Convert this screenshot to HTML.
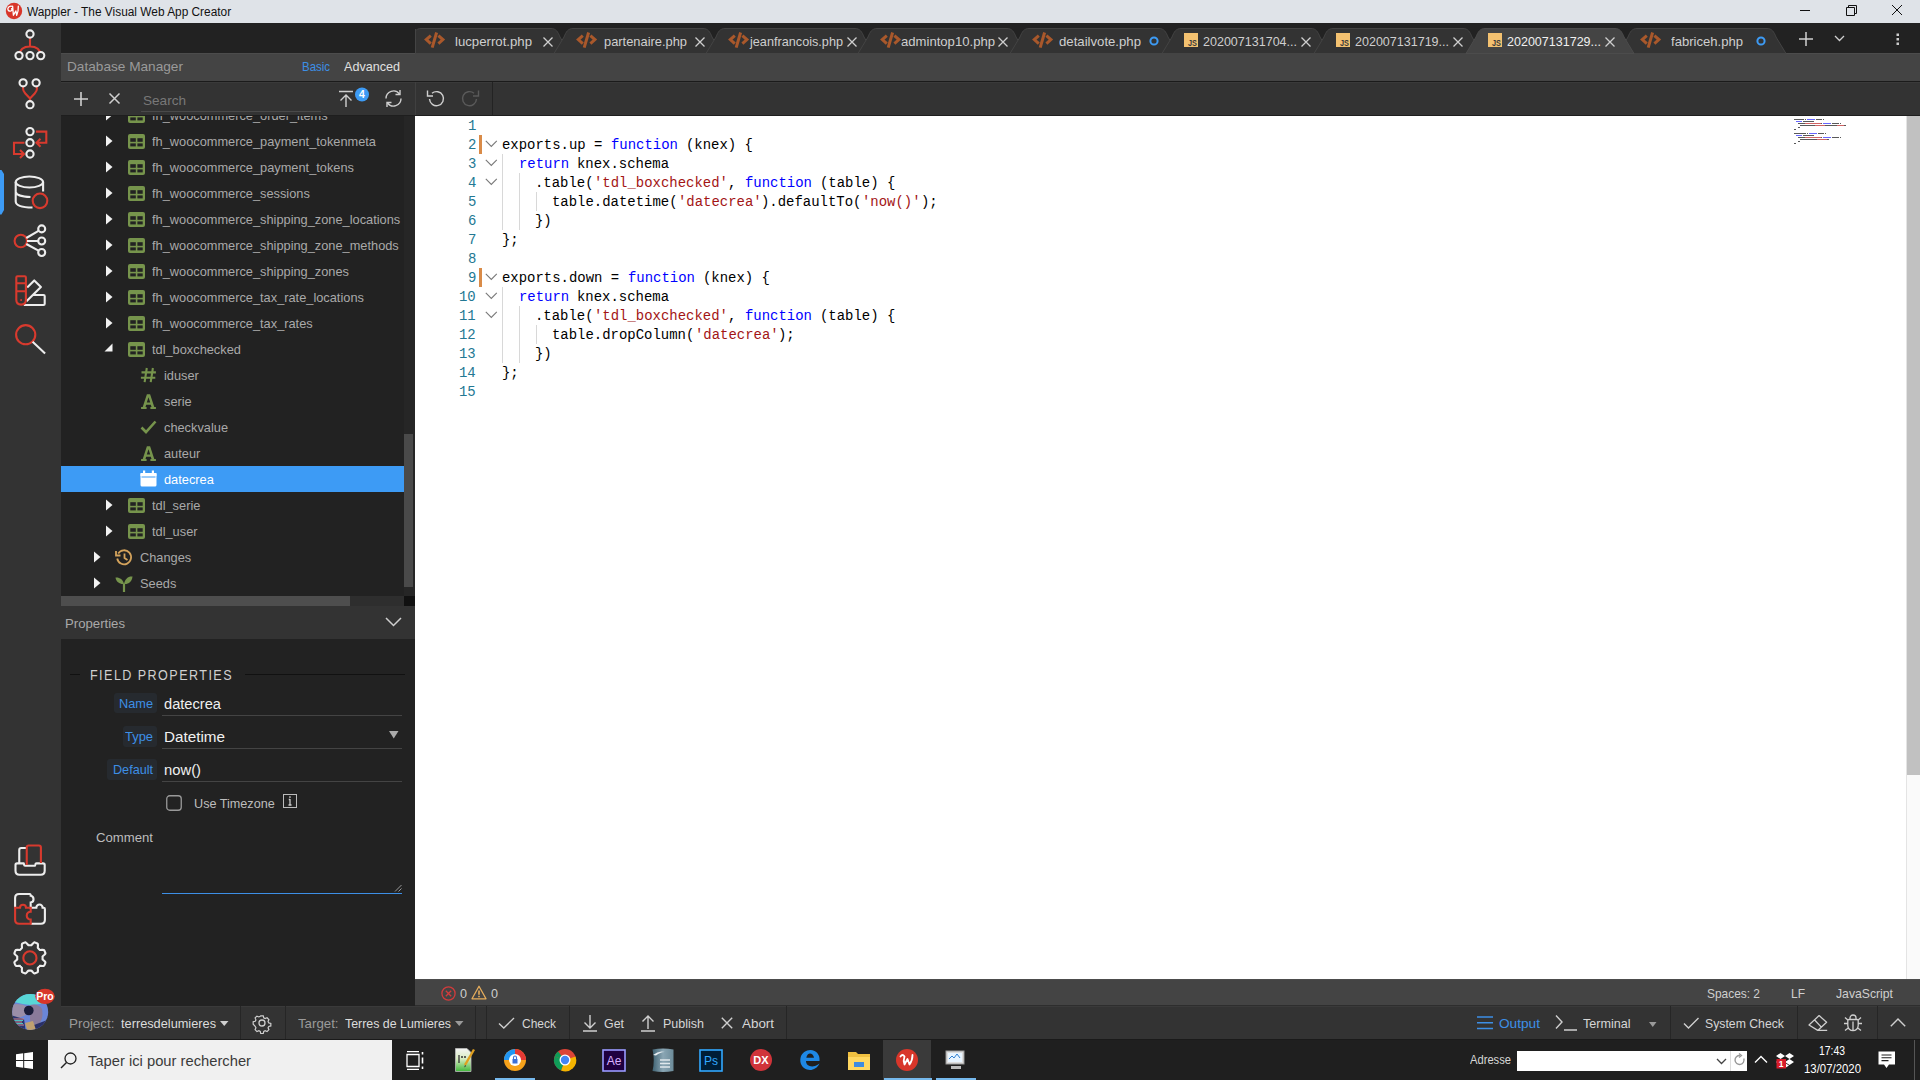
<!DOCTYPE html>
<html><head><meta charset="utf-8">
<style>
*{margin:0;padding:0;box-sizing:border-box}
html,body{width:1920px;height:1080px;overflow:hidden;background:#222;font-family:"Liberation Sans",sans-serif}
.a{position:absolute}
.t{position:absolute;white-space:pre;line-height:1}
svg{position:absolute;overflow:visible}
</style></head><body>
<div class="a" style="left:0px;top:0px;width:1920px;height:23px;background:#dfe3e8;"></div>
<div class="a" style="left:0px;top:23px;width:61px;height:1017px;background:#333;"></div>
<div class="a" style="left:61px;top:23px;width:1859px;height:30px;background:#222;"></div>
<div class="a" style="left:61px;top:53px;width:1859px;height:28px;background:#444;"></div>
<div class="a" style="left:61px;top:53px;width:1859px;height:1px;background:#4c4c4c;"></div>
<div class="a" style="left:61px;top:81px;width:1859px;height:1px;background:#1b1b1b;"></div>
<div class="a" style="left:61px;top:82px;width:1859px;height:34px;background:#333;"></div>
<div class="a" style="left:61px;top:82px;width:1859px;height:1px;background:#3a3a3a;"></div>
<div class="a" style="left:61px;top:115px;width:1859px;height:1px;background:#1e1e1e;"></div>
<div class="a" style="left:61px;top:116px;width:354px;height:490px;background:#222;"></div>
<div class="a" style="left:61px;top:606px;width:354px;height:33px;background:#333;"></div>
<div class="a" style="left:61px;top:639px;width:354px;height:367px;background:#222;"></div>
<div class="a" style="left:415px;top:116px;width:1505px;height:863px;background:#fff;"></div>
<div class="a" style="left:415px;top:979px;width:1505px;height:27px;background:#444;"></div>
<div class="a" style="left:415px;top:979px;width:1505px;height:1px;background:#4c4c4c;"></div>
<div class="a" style="left:415px;top:1005px;width:1505px;height:1px;background:#2e2e2e;"></div>
<div class="a" style="left:61px;top:1006px;width:1859px;height:34px;background:#333;"></div>
<div class="a" style="left:0px;top:1040px;width:1920px;height:40px;background:#1f1f1f;"></div>
<svg style="left:5px;top:2px;" width="18" height="18" viewBox="0 0 18 18"><circle cx="9" cy="9" r="8.2" fill="#d8362a"/><path d="M7.4 4.3Q4 3.3 2.9 6.2Q2.6 9.3 5.5 9.2Q7.6 8.8 6.6 6.6 M7.6 4.1L8.4 13.3L10.9 8.9L11.7 13.3Q13.6 9 13.3 4.1" fill="none" stroke="#fff" stroke-width="1.3" stroke-linecap="round" stroke-linejoin="round"/></svg>
<div class="t" style="left:27.00px;top:5.84px;font:normal 12px/12px 'Liberation Sans',sans-serif;color:#111;transform:scaleX(0.9894);transform-origin:0 0;">Wappler - The Visual Web App Creator</div>
<svg style="left:1795px;top:0px;" width="120" height="23" viewBox="0 0 120 23"><path d="M5 10.5h10" stroke="#111" stroke-width="1"/><path d="M51.5 7.5h8v8h-8z M53.5 7.5v-2h8v8h-2" fill="none" stroke="#111" stroke-width="1"/><path d="M97 5l10 10M107 5l-10 10" stroke="#111" stroke-width="1"/></svg>
<svg style="left:0px;top:0px;" width="1920" height="60" viewBox="0 0 1920 60"><defs><clipPath id="tc"><rect x="415" y="23" width="1400" height="31"/></clipPath></defs><g clip-path="url(#tc)"><path d="M402 53.5 L412 37 C414 32 416 28.5 421 28.5 L551 28.5 C556 28.5 558 32 560 37 L570 53.5 Z" fill="#333" stroke="#444" stroke-width="1"/><path d="M554 53.5 L564 37 C566 32 568 28.5 573 28.5 L703 28.5 C708 28.5 710 32 712 37 L722 53.5 Z" fill="#333" stroke="#444" stroke-width="1"/><path d="M706 53.5 L716 37 C718 32 720 28.5 725 28.5 L855 28.5 C860 28.5 862 32 864 37 L874 53.5 Z" fill="#333" stroke="#444" stroke-width="1"/><path d="M858 53.5 L868 37 C870 32 872 28.5 877 28.5 L1007 28.5 C1012 28.5 1014 32 1016 37 L1026 53.5 Z" fill="#333" stroke="#444" stroke-width="1"/><path d="M1010 53.5 L1020 37 C1022 32 1024 28.5 1029 28.5 L1159 28.5 C1164 28.5 1166 32 1168 37 L1178 53.5 Z" fill="#333" stroke="#444" stroke-width="1"/><path d="M1162 53.5 L1172 37 C1174 32 1176 28.5 1181 28.5 L1311 28.5 C1316 28.5 1318 32 1320 37 L1330 53.5 Z" fill="#333" stroke="#444" stroke-width="1"/><path d="M1314 53.5 L1324 37 C1326 32 1328 28.5 1333 28.5 L1463 28.5 C1468 28.5 1470 32 1472 37 L1482 53.5 Z" fill="#333" stroke="#444" stroke-width="1"/><path d="M1618 53.5 L1628 37 C1630 32 1632 28.5 1637 28.5 L1767 28.5 C1772 28.5 1774 32 1776 37 L1786 53.5 Z" fill="#333" stroke="#444" stroke-width="1"/><path d="M1466 53.5 L1476 37 C1478 32 1480 28.5 1485 28.5 L1615 28.5 C1620 28.5 1622 32 1624 37 L1634 53.5 Z" fill="#444" stroke="#4c4c4c" stroke-width="1"/></g></svg>
<div class="a" style="left:415px;top:29px;width:1px;height:24px;background:#444;"></div>
<svg style="left:412px;top:25px;" width="30" height="26" viewBox="0 0 30 26"><path d="M18.8 10.6 L14.3 14.6 L18.8 18.6 M26.4 10.6 L30.9 14.6 L26.4 18.6 M24.6 7.5 L20.2 22.7" fill="none" stroke="#a9582b" stroke-width="3" stroke-linecap="butt"/></svg>
<div class="t" style="left:455.00px;top:35.00px;font:normal 13px/13px 'Liberation Sans',sans-serif;color:#cfcfcf;transform:scaleX(1.0148);transform-origin:0 0;">lucperrot.php</div>
<svg style="left:543px;top:37px;" width="10" height="10" viewBox="0 0 10 10"><path d="M0.5 0.5l9 9M9.5 0.5l-9 9" stroke="#cfcfcf" stroke-width="1.3"/></svg>
<svg style="left:564px;top:25px;" width="30" height="26" viewBox="0 0 30 26"><path d="M18.8 10.6 L14.3 14.6 L18.8 18.6 M26.4 10.6 L30.9 14.6 L26.4 18.6 M24.6 7.5 L20.2 22.7" fill="none" stroke="#a9582b" stroke-width="3" stroke-linecap="butt"/></svg>
<div class="t" style="left:604.00px;top:35.00px;font:normal 13px/13px 'Liberation Sans',sans-serif;color:#cfcfcf;transform:scaleX(0.9900);transform-origin:0 0;">partenaire.php</div>
<svg style="left:695px;top:37px;" width="10" height="10" viewBox="0 0 10 10"><path d="M0.5 0.5l9 9M9.5 0.5l-9 9" stroke="#cfcfcf" stroke-width="1.3"/></svg>
<svg style="left:716px;top:25px;" width="30" height="26" viewBox="0 0 30 26"><path d="M18.8 10.6 L14.3 14.6 L18.8 18.6 M26.4 10.6 L30.9 14.6 L26.4 18.6 M24.6 7.5 L20.2 22.7" fill="none" stroke="#a9582b" stroke-width="3" stroke-linecap="butt"/></svg>
<div class="t" style="left:750.00px;top:35.00px;font:normal 13px/13px 'Liberation Sans',sans-serif;color:#cfcfcf;transform:scaleX(0.9749);transform-origin:0 0;">jeanfrancois.php</div>
<svg style="left:847px;top:37px;" width="10" height="10" viewBox="0 0 10 10"><path d="M0.5 0.5l9 9M9.5 0.5l-9 9" stroke="#cfcfcf" stroke-width="1.3"/></svg>
<svg style="left:868px;top:25px;" width="30" height="26" viewBox="0 0 30 26"><path d="M18.8 10.6 L14.3 14.6 L18.8 18.6 M26.4 10.6 L30.9 14.6 L26.4 18.6 M24.6 7.5 L20.2 22.7" fill="none" stroke="#a9582b" stroke-width="3" stroke-linecap="butt"/></svg>
<div class="t" style="left:901.00px;top:35.00px;font:normal 13px/13px 'Liberation Sans',sans-serif;color:#cfcfcf;transform:scaleX(1.0081);transform-origin:0 0;">admintop10.php</div>
<svg style="left:998px;top:37px;" width="10" height="10" viewBox="0 0 10 10"><path d="M0.5 0.5l9 9M9.5 0.5l-9 9" stroke="#cfcfcf" stroke-width="1.3"/></svg>
<svg style="left:1020px;top:25px;" width="30" height="26" viewBox="0 0 30 26"><path d="M18.8 10.6 L14.3 14.6 L18.8 18.6 M26.4 10.6 L30.9 14.6 L26.4 18.6 M24.6 7.5 L20.2 22.7" fill="none" stroke="#a9582b" stroke-width="3" stroke-linecap="butt"/></svg>
<div class="t" style="left:1059.00px;top:35.00px;font:normal 13px/13px 'Liberation Sans',sans-serif;color:#cfcfcf;transform:scaleX(1.0130);transform-origin:0 0;">detailvote.php</div>
<svg style="left:1148px;top:35px;" width="12" height="12" viewBox="0 0 12 12"><circle cx="6" cy="6" r="3.6" fill="none" stroke="#3d9bf5" stroke-width="2"/></svg>
<svg style="left:1184px;top:33px;" width="14" height="14" viewBox="0 0 14 14"><rect x="0" y="0" width="14" height="14" fill="#f3c170"/><text x="4" y="12.7" textLength="9" lengthAdjust="spacingAndGlyphs" font-family="Liberation Sans" font-weight="bold" font-size="9.5" fill="#3a3a3a">JS</text></svg>
<div class="t" style="left:1203.00px;top:35.00px;font:normal 13px/13px 'Liberation Sans',sans-serif;color:#cfcfcf;transform:scaleX(0.9632);transform-origin:0 0;">202007131704...</div>
<svg style="left:1301px;top:37px;" width="10" height="10" viewBox="0 0 10 10"><path d="M0.5 0.5l9 9M9.5 0.5l-9 9" stroke="#cfcfcf" stroke-width="1.3"/></svg>
<svg style="left:1336px;top:33px;" width="14" height="14" viewBox="0 0 14 14"><rect x="0" y="0" width="14" height="14" fill="#f3c170"/><text x="4" y="12.7" textLength="9" lengthAdjust="spacingAndGlyphs" font-family="Liberation Sans" font-weight="bold" font-size="9.5" fill="#3a3a3a">JS</text></svg>
<div class="t" style="left:1355.00px;top:35.00px;font:normal 13px/13px 'Liberation Sans',sans-serif;color:#cfcfcf;transform:scaleX(0.9632);transform-origin:0 0;">202007131719...</div>
<svg style="left:1453px;top:37px;" width="10" height="10" viewBox="0 0 10 10"><path d="M0.5 0.5l9 9M9.5 0.5l-9 9" stroke="#cfcfcf" stroke-width="1.3"/></svg>
<svg style="left:1488px;top:33px;" width="14" height="14" viewBox="0 0 14 14"><rect x="0" y="0" width="14" height="14" fill="#f3c170"/><text x="4" y="12.7" textLength="9" lengthAdjust="spacingAndGlyphs" font-family="Liberation Sans" font-weight="bold" font-size="9.5" fill="#3a3a3a">JS</text></svg>
<div class="t" style="left:1507.00px;top:35.00px;font:normal 13px/13px 'Liberation Sans',sans-serif;color:#f0f0f0;transform:scaleX(0.9632);transform-origin:0 0;">202007131729...</div>
<svg style="left:1605px;top:37px;" width="10" height="10" viewBox="0 0 10 10"><path d="M0.5 0.5l9 9M9.5 0.5l-9 9" stroke="#cfcfcf" stroke-width="1.3"/></svg>
<svg style="left:1628px;top:25px;" width="30" height="26" viewBox="0 0 30 26"><path d="M18.8 10.6 L14.3 14.6 L18.8 18.6 M26.4 10.6 L30.9 14.6 L26.4 18.6 M24.6 7.5 L20.2 22.7" fill="none" stroke="#a9582b" stroke-width="3" stroke-linecap="butt"/></svg>
<div class="t" style="left:1671.00px;top:35.00px;font:normal 13px/13px 'Liberation Sans',sans-serif;color:#cfcfcf;transform:scaleX(1.0063);transform-origin:0 0;">fabriceh.php</div>
<svg style="left:1755px;top:35px;" width="12" height="12" viewBox="0 0 12 12"><circle cx="6" cy="6" r="3.6" fill="none" stroke="#3d9bf5" stroke-width="2"/></svg>
<svg style="left:1799px;top:32px;" width="14" height="14" viewBox="0 0 14 14"><path d="M7 0v14M0 7h14" stroke="#d0d0d0" stroke-width="1.5"/></svg>
<svg style="left:1834px;top:35px;" width="11" height="7" viewBox="0 0 11 7"><path d="M1 1l4.5 4.5L10 1" fill="none" stroke="#d0d0d0" stroke-width="1.3"/></svg>
<svg style="left:1896px;top:33px;" width="4" height="13" viewBox="0 0 4 13"><rect x="0.5" y="0.5" width="2.5" height="2.5" fill="#ccc"/><rect x="0.5" y="5" width="2.5" height="2.5" fill="#ccc"/><rect x="0.5" y="9.5" width="2.5" height="2.5" fill="#ccc"/></svg>
<div class="t" style="left:67.00px;top:60.00px;font:normal 13px/13px 'Liberation Sans',sans-serif;color:#9a9a9a;transform:scaleX(1.0491);transform-origin:0 0;">Database Manager</div>
<div class="t" style="left:302.00px;top:60.00px;font:normal 13px/13px 'Liberation Sans',sans-serif;color:#3d8fe6;transform:scaleX(0.8808);transform-origin:0 0;">Basic</div>
<div class="t" style="left:344.00px;top:60.00px;font:normal 13px/13px 'Liberation Sans',sans-serif;color:#e0e0e0;transform:scaleX(0.9685);transform-origin:0 0;">Advanced</div>
<svg style="left:74px;top:92px;" width="14" height="14" viewBox="0 0 14 14"><path d="M7 0v14M0 7h14" stroke="#cfcfcf" stroke-width="1.6"/></svg>
<svg style="left:109px;top:93px;" width="11" height="11" viewBox="0 0 11 11"><path d="M0.5 0.5l10 10M10.5 0.5l-10 10" stroke="#cfcfcf" stroke-width="1.5"/></svg>
<div class="t" style="left:143.00px;top:94.00px;font:normal 13px/13px 'Liberation Sans',sans-serif;color:#787878;transform:scaleX(1.0439);transform-origin:0 0;">Search</div>
<div class="a" style="left:141px;top:111px;width:180px;height:1px;background:#4a4a4a;"></div>
<svg style="left:338px;top:90px;" width="16" height="18" viewBox="0 0 16 18"><path d="M1 1.5h14M8 17V5M2.5 10.5L8 5l5.5 5.5" fill="none" stroke="#cfcfcf" stroke-width="1.4"/></svg>
<svg style="left:354px;top:87px;" width="16" height="16" viewBox="0 0 16 16"><circle cx="8" cy="7.5" r="7" fill="#3d9bf5"/><text x="8" y="11.3" text-anchor="middle" font-family="Liberation Sans" font-weight="bold" font-size="10.5" fill="#fff">4</text></svg>
<svg style="left:384px;top:89px;" width="19" height="19" viewBox="0 0 19 19"><path d="M2 9.5A7.5 7.5 0 0 1 15.5 5M17 9.5A7.5 7.5 0 0 1 3.5 14" fill="none" stroke="#cfcfcf" stroke-width="1.4"/><path d="M16 1v4.5h-4.5M3 18v-4.5h4.5" fill="none" stroke="#cfcfcf" stroke-width="1.4"/></svg>
<div class="a" style="left:415px;top:82px;width:1px;height:33px;background:#404040;"></div>
<div class="a" style="left:404px;top:116px;width:11px;height:490px;background:#262626;"></div>
<div class="a" style="left:404px;top:434px;width:9px;height:153px;background:#4a4a4a;"></div>
<div class="a" style="left:61px;top:596px;width:343px;height:10px;background:#2e2e2e;"></div>
<div class="a" style="left:61px;top:596px;width:289px;height:10px;background:#4e4e4e;"></div>
<div class="a" style="left:404px;top:596px;width:11px;height:10px;background:#111;"></div>
<div class="a" style="left:61px;top:466px;width:343px;height:26px;background:#3d9bf5;"></div>
<div class="a" style="left:61px;top:116px;width:343px;height:481px;overflow:hidden">
<svg style="left:45px;top:-7px;" width="8" height="12" viewBox="0 0 8 12"><path d="M0 0.5L6.5 6L0 11.5Z" fill="#f2f2f2"/></svg>
<svg style="left:67px;top:-8px;" width="17" height="15" viewBox="0 0 17 15"><rect x="0" y="0" width="17" height="15" rx="2" fill="#76944c"/><rect x="2.3" y="4.2" width="5.5" height="3.6" fill="#222"/><rect x="9.4" y="4.2" width="5.3" height="3.6" fill="#222"/><rect x="2.3" y="9.4" width="5.5" height="3" fill="#222"/><rect x="9.4" y="9.4" width="5.3" height="3" fill="#222"/></svg>
<div class="t" style="left:91.00px;top:-7.00px;font:normal 13px/13px 'Liberation Sans',sans-serif;color:#a9a9a9;transform:scaleX(0.9840);transform-origin:0 0;">fh_woocommerce_order_items</div>
<svg style="left:45px;top:19px;" width="8" height="12" viewBox="0 0 8 12"><path d="M0 0.5L6.5 6L0 11.5Z" fill="#f2f2f2"/></svg>
<svg style="left:67px;top:18px;" width="17" height="15" viewBox="0 0 17 15"><rect x="0" y="0" width="17" height="15" rx="2" fill="#76944c"/><rect x="2.3" y="4.2" width="5.5" height="3.6" fill="#222"/><rect x="9.4" y="4.2" width="5.3" height="3.6" fill="#222"/><rect x="2.3" y="9.4" width="5.5" height="3" fill="#222"/><rect x="9.4" y="9.4" width="5.3" height="3" fill="#222"/></svg>
<div class="t" style="left:91.00px;top:19.00px;font:normal 13px/13px 'Liberation Sans',sans-serif;color:#a9a9a9;transform:scaleX(0.9840);transform-origin:0 0;">fh_woocommerce_payment_tokenmeta</div>
<svg style="left:45px;top:45px;" width="8" height="12" viewBox="0 0 8 12"><path d="M0 0.5L6.5 6L0 11.5Z" fill="#f2f2f2"/></svg>
<svg style="left:67px;top:44px;" width="17" height="15" viewBox="0 0 17 15"><rect x="0" y="0" width="17" height="15" rx="2" fill="#76944c"/><rect x="2.3" y="4.2" width="5.5" height="3.6" fill="#222"/><rect x="9.4" y="4.2" width="5.3" height="3.6" fill="#222"/><rect x="2.3" y="9.4" width="5.5" height="3" fill="#222"/><rect x="9.4" y="9.4" width="5.3" height="3" fill="#222"/></svg>
<div class="t" style="left:91.00px;top:45.00px;font:normal 13px/13px 'Liberation Sans',sans-serif;color:#a9a9a9;transform:scaleX(0.9840);transform-origin:0 0;">fh_woocommerce_payment_tokens</div>
<svg style="left:45px;top:71px;" width="8" height="12" viewBox="0 0 8 12"><path d="M0 0.5L6.5 6L0 11.5Z" fill="#f2f2f2"/></svg>
<svg style="left:67px;top:70px;" width="17" height="15" viewBox="0 0 17 15"><rect x="0" y="0" width="17" height="15" rx="2" fill="#76944c"/><rect x="2.3" y="4.2" width="5.5" height="3.6" fill="#222"/><rect x="9.4" y="4.2" width="5.3" height="3.6" fill="#222"/><rect x="2.3" y="9.4" width="5.5" height="3" fill="#222"/><rect x="9.4" y="9.4" width="5.3" height="3" fill="#222"/></svg>
<div class="t" style="left:91.00px;top:71.00px;font:normal 13px/13px 'Liberation Sans',sans-serif;color:#a9a9a9;transform:scaleX(0.9840);transform-origin:0 0;">fh_woocommerce_sessions</div>
<svg style="left:45px;top:97px;" width="8" height="12" viewBox="0 0 8 12"><path d="M0 0.5L6.5 6L0 11.5Z" fill="#f2f2f2"/></svg>
<svg style="left:67px;top:96px;" width="17" height="15" viewBox="0 0 17 15"><rect x="0" y="0" width="17" height="15" rx="2" fill="#76944c"/><rect x="2.3" y="4.2" width="5.5" height="3.6" fill="#222"/><rect x="9.4" y="4.2" width="5.3" height="3.6" fill="#222"/><rect x="2.3" y="9.4" width="5.5" height="3" fill="#222"/><rect x="9.4" y="9.4" width="5.3" height="3" fill="#222"/></svg>
<div class="t" style="left:91.00px;top:97.00px;font:normal 13px/13px 'Liberation Sans',sans-serif;color:#a9a9a9;transform:scaleX(0.9840);transform-origin:0 0;">fh_woocommerce_shipping_zone_locations</div>
<svg style="left:45px;top:123px;" width="8" height="12" viewBox="0 0 8 12"><path d="M0 0.5L6.5 6L0 11.5Z" fill="#f2f2f2"/></svg>
<svg style="left:67px;top:122px;" width="17" height="15" viewBox="0 0 17 15"><rect x="0" y="0" width="17" height="15" rx="2" fill="#76944c"/><rect x="2.3" y="4.2" width="5.5" height="3.6" fill="#222"/><rect x="9.4" y="4.2" width="5.3" height="3.6" fill="#222"/><rect x="2.3" y="9.4" width="5.5" height="3" fill="#222"/><rect x="9.4" y="9.4" width="5.3" height="3" fill="#222"/></svg>
<div class="t" style="left:91.00px;top:123.00px;font:normal 13px/13px 'Liberation Sans',sans-serif;color:#a9a9a9;transform:scaleX(0.9840);transform-origin:0 0;">fh_woocommerce_shipping_zone_methods</div>
<svg style="left:45px;top:149px;" width="8" height="12" viewBox="0 0 8 12"><path d="M0 0.5L6.5 6L0 11.5Z" fill="#f2f2f2"/></svg>
<svg style="left:67px;top:148px;" width="17" height="15" viewBox="0 0 17 15"><rect x="0" y="0" width="17" height="15" rx="2" fill="#76944c"/><rect x="2.3" y="4.2" width="5.5" height="3.6" fill="#222"/><rect x="9.4" y="4.2" width="5.3" height="3.6" fill="#222"/><rect x="2.3" y="9.4" width="5.5" height="3" fill="#222"/><rect x="9.4" y="9.4" width="5.3" height="3" fill="#222"/></svg>
<div class="t" style="left:91.00px;top:149.00px;font:normal 13px/13px 'Liberation Sans',sans-serif;color:#a9a9a9;transform:scaleX(0.9840);transform-origin:0 0;">fh_woocommerce_shipping_zones</div>
<svg style="left:45px;top:175px;" width="8" height="12" viewBox="0 0 8 12"><path d="M0 0.5L6.5 6L0 11.5Z" fill="#f2f2f2"/></svg>
<svg style="left:67px;top:174px;" width="17" height="15" viewBox="0 0 17 15"><rect x="0" y="0" width="17" height="15" rx="2" fill="#76944c"/><rect x="2.3" y="4.2" width="5.5" height="3.6" fill="#222"/><rect x="9.4" y="4.2" width="5.3" height="3.6" fill="#222"/><rect x="2.3" y="9.4" width="5.5" height="3" fill="#222"/><rect x="9.4" y="9.4" width="5.3" height="3" fill="#222"/></svg>
<div class="t" style="left:91.00px;top:175.00px;font:normal 13px/13px 'Liberation Sans',sans-serif;color:#a9a9a9;transform:scaleX(0.9840);transform-origin:0 0;">fh_woocommerce_tax_rate_locations</div>
<svg style="left:45px;top:201px;" width="8" height="12" viewBox="0 0 8 12"><path d="M0 0.5L6.5 6L0 11.5Z" fill="#f2f2f2"/></svg>
<svg style="left:67px;top:200px;" width="17" height="15" viewBox="0 0 17 15"><rect x="0" y="0" width="17" height="15" rx="2" fill="#76944c"/><rect x="2.3" y="4.2" width="5.5" height="3.6" fill="#222"/><rect x="9.4" y="4.2" width="5.3" height="3.6" fill="#222"/><rect x="2.3" y="9.4" width="5.5" height="3" fill="#222"/><rect x="9.4" y="9.4" width="5.3" height="3" fill="#222"/></svg>
<div class="t" style="left:91.00px;top:201.00px;font:normal 13px/13px 'Liberation Sans',sans-serif;color:#a9a9a9;transform:scaleX(0.9840);transform-origin:0 0;">fh_woocommerce_tax_rates</div>
<svg style="left:43px;top:226.5px;" width="10" height="10" viewBox="0 0 10 10"><path d="M8.5 0.5V8.5H0.5Z" fill="#f2f2f2"/></svg>
<svg style="left:67px;top:226px;" width="17" height="15" viewBox="0 0 17 15"><rect x="0" y="0" width="17" height="15" rx="2" fill="#76944c"/><rect x="2.3" y="4.2" width="5.5" height="3.6" fill="#222"/><rect x="9.4" y="4.2" width="5.3" height="3.6" fill="#222"/><rect x="2.3" y="9.4" width="5.5" height="3" fill="#222"/><rect x="9.4" y="9.4" width="5.3" height="3" fill="#222"/></svg>
<div class="t" style="left:91.00px;top:227.00px;font:normal 13px/13px 'Liberation Sans',sans-serif;color:#a9a9a9;transform:scaleX(0.9840);transform-origin:0 0;">tdl_boxchecked</div>
<svg style="left:79px;top:251px;" width="17" height="16" viewBox="0 0 17 16"><path d="M6.8 1L4.6 15.2 M12.9 1L10.7 15.2 M1.5 5.4H15.9 M0.9 10.7H15.3" fill="none" stroke="#76944c" stroke-width="2.1"/></svg>
<div class="t" style="left:103.00px;top:253.00px;font:normal 13px/13px 'Liberation Sans',sans-serif;color:#a9a9a9;transform:scaleX(0.9840);transform-origin:0 0;">iduser</div>
<svg style="left:79px;top:277px;" width="17" height="17" viewBox="0 0 17 17"><path d="M6.9 1.3H10.1L14.3 14H15.9V16H10.4V14H11.5L10.8 11.7H6.2L5.5 14H6.6V16H1.1V14H2.7Z M6.8 9.5H10.2L8.5 4.2Z" fill="#76944c" fill-rule="evenodd"/></svg>
<div class="t" style="left:103.00px;top:279.00px;font:normal 13px/13px 'Liberation Sans',sans-serif;color:#a9a9a9;transform:scaleX(0.9840);transform-origin:0 0;">serie</div>
<svg style="left:79px;top:304px;" width="17" height="14" viewBox="0 0 17 14"><path d="M1.5 7.5L6 12L15.5 1.5" fill="none" stroke="#76944c" stroke-width="2.6"/></svg>
<div class="t" style="left:103.00px;top:305.00px;font:normal 13px/13px 'Liberation Sans',sans-serif;color:#a9a9a9;transform:scaleX(0.9840);transform-origin:0 0;">checkvalue</div>
<svg style="left:79px;top:329px;" width="17" height="17" viewBox="0 0 17 17"><path d="M6.9 1.3H10.1L14.3 14H15.9V16H10.4V14H11.5L10.8 11.7H6.2L5.5 14H6.6V16H1.1V14H2.7Z M6.8 9.5H10.2L8.5 4.2Z" fill="#76944c" fill-rule="evenodd"/></svg>
<div class="t" style="left:103.00px;top:331.00px;font:normal 13px/13px 'Liberation Sans',sans-serif;color:#a9a9a9;transform:scaleX(0.9840);transform-origin:0 0;">auteur</div>
<svg style="left:79px;top:354px;" width="17" height="17" viewBox="0 0 17 17"><rect x="0.5" y="3" width="16" height="13.5" rx="1.5" fill="#fff"/><rect x="0.5" y="3" width="16" height="3" fill="#fff"/><rect x="3" y="0.5" width="2.2" height="3.5" fill="#fff"/><rect x="11.8" y="0.5" width="2.2" height="3.5" fill="#fff"/><rect x="1.5" y="6.5" width="14" height="1" fill="#3d9bf5"/></svg>
<div class="t" style="left:103.00px;top:357.00px;font:normal 13px/13px 'Liberation Sans',sans-serif;color:#fff;transform:scaleX(0.9840);transform-origin:0 0;">datecrea</div>
<svg style="left:45px;top:383px;" width="8" height="12" viewBox="0 0 8 12"><path d="M0 0.5L6.5 6L0 11.5Z" fill="#f2f2f2"/></svg>
<svg style="left:67px;top:382px;" width="17" height="15" viewBox="0 0 17 15"><rect x="0" y="0" width="17" height="15" rx="2" fill="#76944c"/><rect x="2.3" y="4.2" width="5.5" height="3.6" fill="#222"/><rect x="9.4" y="4.2" width="5.3" height="3.6" fill="#222"/><rect x="2.3" y="9.4" width="5.5" height="3" fill="#222"/><rect x="9.4" y="9.4" width="5.3" height="3" fill="#222"/></svg>
<div class="t" style="left:91.00px;top:383.00px;font:normal 13px/13px 'Liberation Sans',sans-serif;color:#a9a9a9;transform:scaleX(0.9840);transform-origin:0 0;">tdl_serie</div>
<svg style="left:45px;top:409px;" width="8" height="12" viewBox="0 0 8 12"><path d="M0 0.5L6.5 6L0 11.5Z" fill="#f2f2f2"/></svg>
<svg style="left:67px;top:408px;" width="17" height="15" viewBox="0 0 17 15"><rect x="0" y="0" width="17" height="15" rx="2" fill="#76944c"/><rect x="2.3" y="4.2" width="5.5" height="3.6" fill="#222"/><rect x="9.4" y="4.2" width="5.3" height="3.6" fill="#222"/><rect x="2.3" y="9.4" width="5.5" height="3" fill="#222"/><rect x="9.4" y="9.4" width="5.3" height="3" fill="#222"/></svg>
<div class="t" style="left:91.00px;top:409.00px;font:normal 13px/13px 'Liberation Sans',sans-serif;color:#a9a9a9;transform:scaleX(0.9840);transform-origin:0 0;">tdl_user</div>
<svg style="left:33px;top:435px;" width="8" height="12" viewBox="0 0 8 12"><path d="M0 0.5L6.5 6L0 11.5Z" fill="#f2f2f2"/></svg>
<svg style="left:54px;top:432px;" width="18" height="18" viewBox="0 0 18 18"><path d="M3.2 5.5A7 7 0 1 1 2.2 10.5" fill="none" stroke="#d4a35c" stroke-width="1.8"/><path d="M1 3v4.5h4.5" fill="none" stroke="#d4a35c" stroke-width="1.8"/><path d="M9.5 5.5V10l3 2" fill="none" stroke="#d4a35c" stroke-width="1.8"/></svg>
<div class="t" style="left:79.00px;top:435.00px;font:normal 13px/13px 'Liberation Sans',sans-serif;color:#a9a9a9;transform:scaleX(0.9840);transform-origin:0 0;">Changes</div>
<svg style="left:33px;top:461px;" width="8" height="12" viewBox="0 0 8 12"><path d="M0 0.5L6.5 6L0 11.5Z" fill="#f2f2f2"/></svg>
<svg style="left:54px;top:459px;" width="18" height="17" viewBox="0 0 18 17"><path d="M9 17V9" stroke="#76944c" stroke-width="2.2"/><path d="M9 9C8 4 4 2 0.5 2.5C1 7 5 9.5 9 9Z" fill="#76944c"/><path d="M9 9C10 3.5 13.5 1 17.5 1.5C17 6.5 13.5 9.5 9 9Z" fill="#76944c"/></svg>
<div class="t" style="left:79.00px;top:461.00px;font:normal 13px/13px 'Liberation Sans',sans-serif;color:#a9a9a9;transform:scaleX(0.9840);transform-origin:0 0;">Seeds</div>
</div>
<div class="t" style="left:65.00px;top:617.00px;font:normal 13px/13px 'Liberation Sans',sans-serif;color:#a9a9a9;transform:scaleX(1.0127);transform-origin:0 0;">Properties</div>
<svg style="left:385px;top:617px;" width="17" height="10" viewBox="0 0 17 10"><path d="M1 1l7.5 7.5L16 1" fill="none" stroke="#cfcfcf" stroke-width="1.5"/></svg>
<div class="t" style="left:90.00px;top:668.15px;font:normal 14px/14px 'Liberation Sans',sans-serif;color:#d0d0d0;transform:scaleX(0.8985);transform-origin:0 0;letter-spacing:1.6px;">FIELD PROPERTIES</div>
<div class="a" style="left:70px;top:674px;width:10px;height:1px;background:#111;"></div>
<div class="a" style="left:245px;top:674px;width:160px;height:1px;background:#111;"></div>
<div class="a" style="left:114px;top:693px;width:43px;height:20px;background:#262a2f;border-radius:3px;"></div>
<div class="t" style="left:119.00px;top:697.00px;font:normal 13px/13px 'Liberation Sans',sans-serif;color:#3d8fe6;transform:scaleX(0.9805);transform-origin:0 0;">Name</div>
<div class="a" style="left:123px;top:726px;width:34px;height:21px;background:#262a2f;border-radius:3px;"></div>
<div class="t" style="left:125.00px;top:730.00px;font:normal 13px/13px 'Liberation Sans',sans-serif;color:#3d8fe6;transform:scaleX(0.9935);transform-origin:0 0;">Type</div>
<div class="a" style="left:107px;top:759px;width:50px;height:21px;background:#262a2f;border-radius:3px;"></div>
<div class="t" style="left:113.00px;top:763.00px;font:normal 13px/13px 'Liberation Sans',sans-serif;color:#3d8fe6;transform:scaleX(0.9711);transform-origin:0 0;">Default</div>
<div class="t" style="left:164.00px;top:697.15px;font:normal 14px/14px 'Liberation Sans',sans-serif;color:#f0f0f0;transform:scaleX(1.0462);transform-origin:0 0;">datecrea</div>
<div class="a" style="left:162px;top:715px;width:240px;height:1px;background:#444;"></div>
<div class="t" style="left:164.00px;top:730.15px;font:normal 14px/14px 'Liberation Sans',sans-serif;color:#f0f0f0;transform:scaleX(1.0889);transform-origin:0 0;">Datetime</div>
<svg style="left:389px;top:731px;" width="10" height="8" viewBox="0 0 10 8"><path d="M0 0H9.5L4.75 7.5Z" fill="#aaa"/></svg>
<div class="a" style="left:162px;top:748px;width:240px;height:1px;background:#444;"></div>
<div class="t" style="left:164.00px;top:763.15px;font:normal 14px/14px 'Liberation Sans',sans-serif;color:#f0f0f0;transform:scaleX(1.0569);transform-origin:0 0;">now()</div>
<div class="a" style="left:162px;top:781px;width:240px;height:1px;background:#444;"></div>
<svg style="left:166px;top:795px;" width="16" height="16" viewBox="0 0 16 16"><rect x="0.75" y="0.75" width="14.5" height="14.5" rx="3" fill="none" stroke="#999" stroke-width="1.3"/></svg>
<div class="t" style="left:194.00px;top:797.00px;font:normal 13px/13px 'Liberation Sans',sans-serif;color:#bdbdbd;transform:scaleX(0.9721);transform-origin:0 0;">Use Timezone</div>
<svg style="left:283px;top:794px;" width="14" height="14" viewBox="0 0 14 14"><rect x="0.5" y="0.5" width="13" height="13" fill="none" stroke="#bbb" stroke-width="1"/><path d="M7 5v6M5.5 11h3M5.8 5.5H7" stroke="#ccc" stroke-width="1.3"/><rect x="6.2" y="2.3" width="1.5" height="1.5" fill="#ccc"/></svg>
<div class="t" style="left:96.00px;top:831.00px;font:normal 13px/13px 'Liberation Sans',sans-serif;color:#bdbdbd;transform:scaleX(1.0116);transform-origin:0 0;">Comment</div>
<div class="a" style="left:162px;top:892.5px;width:240px;height:1.5px;background:#3d8fe6;"></div>
<svg style="left:394px;top:884px;" width="8" height="8" viewBox="0 0 8 8"><path d="M7.5 1L1 7.5M7.5 4.5L4.5 7.5" stroke="#999" stroke-width="1"/></svg>
<svg style="left:426px;top:89px;" width="20" height="20" viewBox="0 0 20 20"><path d="M3.5 10A7 7 0 1 0 6 4.3" fill="none" stroke="#cfcfcf" stroke-width="1.4"/><path d="M1.5 1.5v5.5h5.5" fill="none" stroke="#cfcfcf" stroke-width="1.4"/></svg>
<svg style="left:460px;top:89px;" width="20" height="20" viewBox="0 0 20 20"><path d="M16.5 10A7 7 0 1 1 14 4.3" fill="none" stroke="#5a5a5a" stroke-width="1.4"/><path d="M18.5 1.5v5.5h-5.5" fill="none" stroke="#5a5a5a" stroke-width="1.4"/></svg>
<div class="a" style="left:492px;top:82px;width:1px;height:33px;background:#232323;"></div>
<div class="t" style="left:467.63px;top:119.27px;font:normal 14px/14px 'Liberation Mono',sans-serif;color:#237893;transform:scaleX(0.9963);transform-origin:0 0;">1</div>
<div class="t" style="left:467.63px;top:138.27px;font:normal 14px/14px 'Liberation Mono',sans-serif;color:#237893;transform:scaleX(0.9963);transform-origin:0 0;">2</div>
<svg style="left:485px;top:140px;" width="13" height="8" viewBox="0 0 13 8"><path d="M0.8 0.8L6.3 6.5L11.8 0.8" fill="none" stroke="#7a7a7a" stroke-width="1.1"/></svg>
<div class="a" style="left:479px;top:135px;width:3px;height:19px;background:#d98b48;"></div>
<div class="t" style="left:502.00px;top:138.27px;font:normal 14px/14px 'Liberation Mono',sans-serif;color:#000;transform:scaleX(0.9963);transform-origin:0 0;">exports.up = </div>
<div class="t" style="left:610.81px;top:138.27px;font:normal 14px/14px 'Liberation Mono',sans-serif;color:#0000ff;transform:scaleX(0.9963);transform-origin:0 0;">function</div>
<div class="t" style="left:686.14px;top:138.27px;font:normal 14px/14px 'Liberation Mono',sans-serif;color:#000;transform:scaleX(0.9963);transform-origin:0 0;">(knex) {</div>
<div class="t" style="left:467.63px;top:157.27px;font:normal 14px/14px 'Liberation Mono',sans-serif;color:#237893;transform:scaleX(0.9963);transform-origin:0 0;">3</div>
<svg style="left:485px;top:159px;" width="13" height="8" viewBox="0 0 13 8"><path d="M0.8 0.8L6.3 6.5L11.8 0.8" fill="none" stroke="#7a7a7a" stroke-width="1.1"/></svg>
<div class="t" style="left:518.74px;top:157.27px;font:normal 14px/14px 'Liberation Mono',sans-serif;color:#0000ff;transform:scaleX(0.9963);transform-origin:0 0;">return</div>
<div class="t" style="left:577.33px;top:157.27px;font:normal 14px/14px 'Liberation Mono',sans-serif;color:#000;transform:scaleX(0.9963);transform-origin:0 0;">knex.schema</div>
<div class="t" style="left:467.63px;top:176.27px;font:normal 14px/14px 'Liberation Mono',sans-serif;color:#237893;transform:scaleX(0.9963);transform-origin:0 0;">4</div>
<svg style="left:485px;top:178px;" width="13" height="8" viewBox="0 0 13 8"><path d="M0.8 0.8L6.3 6.5L11.8 0.8" fill="none" stroke="#7a7a7a" stroke-width="1.1"/></svg>
<div class="t" style="left:535.48px;top:176.27px;font:normal 14px/14px 'Liberation Mono',sans-serif;color:#000;transform:scaleX(0.9963);transform-origin:0 0;">.table(</div>
<div class="t" style="left:594.07px;top:176.27px;font:normal 14px/14px 'Liberation Mono',sans-serif;color:#a31515;transform:scaleX(0.9963);transform-origin:0 0;">'tdl_boxchecked'</div>
<div class="t" style="left:727.99px;top:176.27px;font:normal 14px/14px 'Liberation Mono',sans-serif;color:#000;transform:scaleX(0.9963);transform-origin:0 0;">, </div>
<div class="t" style="left:744.73px;top:176.27px;font:normal 14px/14px 'Liberation Mono',sans-serif;color:#0000ff;transform:scaleX(0.9963);transform-origin:0 0;">function</div>
<div class="t" style="left:820.06px;top:176.27px;font:normal 14px/14px 'Liberation Mono',sans-serif;color:#000;transform:scaleX(0.9963);transform-origin:0 0;">(table) {</div>
<div class="t" style="left:467.63px;top:195.27px;font:normal 14px/14px 'Liberation Mono',sans-serif;color:#237893;transform:scaleX(0.9963);transform-origin:0 0;">5</div>
<div class="t" style="left:552.22px;top:195.27px;font:normal 14px/14px 'Liberation Mono',sans-serif;color:#000;transform:scaleX(0.9963);transform-origin:0 0;">table.datetime(</div>
<div class="t" style="left:677.77px;top:195.27px;font:normal 14px/14px 'Liberation Mono',sans-serif;color:#a31515;transform:scaleX(0.9963);transform-origin:0 0;">'datecrea'</div>
<div class="t" style="left:761.47px;top:195.27px;font:normal 14px/14px 'Liberation Mono',sans-serif;color:#000;transform:scaleX(0.9963);transform-origin:0 0;">).defaultTo(</div>
<div class="t" style="left:861.91px;top:195.27px;font:normal 14px/14px 'Liberation Mono',sans-serif;color:#a31515;transform:scaleX(0.9963);transform-origin:0 0;">'now()'</div>
<div class="t" style="left:920.50px;top:195.27px;font:normal 14px/14px 'Liberation Mono',sans-serif;color:#000;transform:scaleX(0.9963);transform-origin:0 0;">);</div>
<div class="t" style="left:467.63px;top:214.27px;font:normal 14px/14px 'Liberation Mono',sans-serif;color:#237893;transform:scaleX(0.9963);transform-origin:0 0;">6</div>
<div class="t" style="left:535.48px;top:214.27px;font:normal 14px/14px 'Liberation Mono',sans-serif;color:#000;transform:scaleX(0.9963);transform-origin:0 0;">})</div>
<div class="t" style="left:467.63px;top:233.27px;font:normal 14px/14px 'Liberation Mono',sans-serif;color:#237893;transform:scaleX(0.9963);transform-origin:0 0;">7</div>
<div class="t" style="left:502.00px;top:233.27px;font:normal 14px/14px 'Liberation Mono',sans-serif;color:#000;transform:scaleX(0.9963);transform-origin:0 0;">};</div>
<div class="t" style="left:467.63px;top:252.27px;font:normal 14px/14px 'Liberation Mono',sans-serif;color:#237893;transform:scaleX(0.9963);transform-origin:0 0;">8</div>
<div class="t" style="left:467.63px;top:271.27px;font:normal 14px/14px 'Liberation Mono',sans-serif;color:#237893;transform:scaleX(0.9963);transform-origin:0 0;">9</div>
<svg style="left:485px;top:273px;" width="13" height="8" viewBox="0 0 13 8"><path d="M0.8 0.8L6.3 6.5L11.8 0.8" fill="none" stroke="#7a7a7a" stroke-width="1.1"/></svg>
<div class="a" style="left:479px;top:268px;width:3px;height:19px;background:#d98b48;"></div>
<div class="t" style="left:502.00px;top:271.27px;font:normal 14px/14px 'Liberation Mono',sans-serif;color:#000;transform:scaleX(0.9963);transform-origin:0 0;">exports.down = </div>
<div class="t" style="left:627.55px;top:271.27px;font:normal 14px/14px 'Liberation Mono',sans-serif;color:#0000ff;transform:scaleX(0.9963);transform-origin:0 0;">function</div>
<div class="t" style="left:702.88px;top:271.27px;font:normal 14px/14px 'Liberation Mono',sans-serif;color:#000;transform:scaleX(0.9963);transform-origin:0 0;">(knex) {</div>
<div class="t" style="left:459.26px;top:290.27px;font:normal 14px/14px 'Liberation Mono',sans-serif;color:#237893;transform:scaleX(0.9963);transform-origin:0 0;">10</div>
<svg style="left:485px;top:292px;" width="13" height="8" viewBox="0 0 13 8"><path d="M0.8 0.8L6.3 6.5L11.8 0.8" fill="none" stroke="#7a7a7a" stroke-width="1.1"/></svg>
<div class="t" style="left:518.74px;top:290.27px;font:normal 14px/14px 'Liberation Mono',sans-serif;color:#0000ff;transform:scaleX(0.9963);transform-origin:0 0;">return</div>
<div class="t" style="left:577.33px;top:290.27px;font:normal 14px/14px 'Liberation Mono',sans-serif;color:#000;transform:scaleX(0.9963);transform-origin:0 0;">knex.schema</div>
<div class="t" style="left:459.26px;top:309.27px;font:normal 14px/14px 'Liberation Mono',sans-serif;color:#237893;transform:scaleX(0.9963);transform-origin:0 0;">11</div>
<svg style="left:485px;top:311px;" width="13" height="8" viewBox="0 0 13 8"><path d="M0.8 0.8L6.3 6.5L11.8 0.8" fill="none" stroke="#7a7a7a" stroke-width="1.1"/></svg>
<div class="t" style="left:535.48px;top:309.27px;font:normal 14px/14px 'Liberation Mono',sans-serif;color:#000;transform:scaleX(0.9963);transform-origin:0 0;">.table(</div>
<div class="t" style="left:594.07px;top:309.27px;font:normal 14px/14px 'Liberation Mono',sans-serif;color:#a31515;transform:scaleX(0.9963);transform-origin:0 0;">'tdl_boxchecked'</div>
<div class="t" style="left:727.99px;top:309.27px;font:normal 14px/14px 'Liberation Mono',sans-serif;color:#000;transform:scaleX(0.9963);transform-origin:0 0;">, </div>
<div class="t" style="left:744.73px;top:309.27px;font:normal 14px/14px 'Liberation Mono',sans-serif;color:#0000ff;transform:scaleX(0.9963);transform-origin:0 0;">function</div>
<div class="t" style="left:820.06px;top:309.27px;font:normal 14px/14px 'Liberation Mono',sans-serif;color:#000;transform:scaleX(0.9963);transform-origin:0 0;">(table) {</div>
<div class="t" style="left:459.26px;top:328.27px;font:normal 14px/14px 'Liberation Mono',sans-serif;color:#237893;transform:scaleX(0.9963);transform-origin:0 0;">12</div>
<div class="t" style="left:552.22px;top:328.27px;font:normal 14px/14px 'Liberation Mono',sans-serif;color:#000;transform:scaleX(0.9963);transform-origin:0 0;">table.dropColumn(</div>
<div class="t" style="left:694.51px;top:328.27px;font:normal 14px/14px 'Liberation Mono',sans-serif;color:#a31515;transform:scaleX(0.9963);transform-origin:0 0;">'datecrea'</div>
<div class="t" style="left:778.21px;top:328.27px;font:normal 14px/14px 'Liberation Mono',sans-serif;color:#000;transform:scaleX(0.9963);transform-origin:0 0;">);</div>
<div class="t" style="left:459.26px;top:347.27px;font:normal 14px/14px 'Liberation Mono',sans-serif;color:#237893;transform:scaleX(0.9963);transform-origin:0 0;">13</div>
<div class="t" style="left:535.48px;top:347.27px;font:normal 14px/14px 'Liberation Mono',sans-serif;color:#000;transform:scaleX(0.9963);transform-origin:0 0;">})</div>
<div class="t" style="left:459.26px;top:366.27px;font:normal 14px/14px 'Liberation Mono',sans-serif;color:#237893;transform:scaleX(0.9963);transform-origin:0 0;">14</div>
<div class="t" style="left:502.00px;top:366.27px;font:normal 14px/14px 'Liberation Mono',sans-serif;color:#000;transform:scaleX(0.9963);transform-origin:0 0;">};</div>
<div class="t" style="left:459.26px;top:385.27px;font:normal 14px/14px 'Liberation Mono',sans-serif;color:#237893;transform:scaleX(0.9963);transform-origin:0 0;">15</div>
<div class="a" style="left:502px;top:154px;width:1px;height:76px;background:#d8d8d8;"></div>
<div class="a" style="left:519px;top:173px;width:1px;height:57px;background:#d8d8d8;"></div>
<div class="a" style="left:536px;top:192px;width:1px;height:19px;background:#d8d8d8;"></div>
<div class="a" style="left:502px;top:287px;width:1px;height:76px;background:#d8d8d8;"></div>
<div class="a" style="left:519px;top:306px;width:1px;height:57px;background:#d8d8d8;"></div>
<div class="a" style="left:536px;top:325px;width:1px;height:19px;background:#d8d8d8;"></div>
<div class="a" style="left:1794.0px;top:118.5px;width:10.0px;height:1.4px;background:#222;opacity:0.75;"></div>
<div class="a" style="left:1805.0px;top:118.5px;width:1.0px;height:1.4px;background:#222;opacity:0.75;"></div>
<div class="a" style="left:1807.0px;top:118.5px;width:8.0px;height:1.4px;background:#3333ff;opacity:0.75;"></div>
<div class="a" style="left:1816.0px;top:118.5px;width:6.0px;height:1.4px;background:#222;opacity:0.75;"></div>
<div class="a" style="left:1823.0px;top:118.5px;width:1.0px;height:1.4px;background:#222;opacity:0.75;"></div>
<div class="a" style="left:1796.0px;top:120.5px;width:6.0px;height:1.4px;background:#3333ff;opacity:0.75;"></div>
<div class="a" style="left:1803.0px;top:120.5px;width:11.0px;height:1.4px;background:#222;opacity:0.75;"></div>
<div class="a" style="left:1798.0px;top:122.5px;width:7.0px;height:1.4px;background:#222;opacity:0.75;"></div>
<div class="a" style="left:1805.0px;top:122.5px;width:16.0px;height:1.4px;background:#c03030;opacity:0.75;"></div>
<div class="a" style="left:1821.0px;top:122.5px;width:1.0px;height:1.4px;background:#222;opacity:0.75;"></div>
<div class="a" style="left:1823.0px;top:122.5px;width:8.0px;height:1.4px;background:#3333ff;opacity:0.75;"></div>
<div class="a" style="left:1832.0px;top:122.5px;width:7.0px;height:1.4px;background:#222;opacity:0.75;"></div>
<div class="a" style="left:1840.0px;top:122.5px;width:1.0px;height:1.4px;background:#222;opacity:0.75;"></div>
<div class="a" style="left:1800.0px;top:124.5px;width:15.0px;height:1.4px;background:#222;opacity:0.75;"></div>
<div class="a" style="left:1815.0px;top:124.5px;width:10.0px;height:1.4px;background:#c03030;opacity:0.75;"></div>
<div class="a" style="left:1825.0px;top:124.5px;width:12.0px;height:1.4px;background:#222;opacity:0.75;"></div>
<div class="a" style="left:1837.0px;top:124.5px;width:7.0px;height:1.4px;background:#c03030;opacity:0.75;"></div>
<div class="a" style="left:1844.0px;top:124.5px;width:2.0px;height:1.4px;background:#222;opacity:0.75;"></div>
<div class="a" style="left:1798.0px;top:126.5px;width:2.0px;height:1.4px;background:#222;opacity:0.75;"></div>
<div class="a" style="left:1794.0px;top:128.5px;width:2.0px;height:1.4px;background:#222;opacity:0.75;"></div>
<div class="a" style="left:1794.0px;top:132.5px;width:12.0px;height:1.4px;background:#222;opacity:0.75;"></div>
<div class="a" style="left:1807.0px;top:132.5px;width:1.0px;height:1.4px;background:#222;opacity:0.75;"></div>
<div class="a" style="left:1809.0px;top:132.5px;width:8.0px;height:1.4px;background:#3333ff;opacity:0.75;"></div>
<div class="a" style="left:1818.0px;top:132.5px;width:6.0px;height:1.4px;background:#222;opacity:0.75;"></div>
<div class="a" style="left:1825.0px;top:132.5px;width:1.0px;height:1.4px;background:#222;opacity:0.75;"></div>
<div class="a" style="left:1796.0px;top:134.5px;width:6.0px;height:1.4px;background:#3333ff;opacity:0.75;"></div>
<div class="a" style="left:1803.0px;top:134.5px;width:11.0px;height:1.4px;background:#222;opacity:0.75;"></div>
<div class="a" style="left:1798.0px;top:136.5px;width:7.0px;height:1.4px;background:#222;opacity:0.75;"></div>
<div class="a" style="left:1805.0px;top:136.5px;width:16.0px;height:1.4px;background:#c03030;opacity:0.75;"></div>
<div class="a" style="left:1821.0px;top:136.5px;width:1.0px;height:1.4px;background:#222;opacity:0.75;"></div>
<div class="a" style="left:1823.0px;top:136.5px;width:8.0px;height:1.4px;background:#3333ff;opacity:0.75;"></div>
<div class="a" style="left:1832.0px;top:136.5px;width:7.0px;height:1.4px;background:#222;opacity:0.75;"></div>
<div class="a" style="left:1840.0px;top:136.5px;width:1.0px;height:1.4px;background:#222;opacity:0.75;"></div>
<div class="a" style="left:1800.0px;top:138.5px;width:17.0px;height:1.4px;background:#222;opacity:0.75;"></div>
<div class="a" style="left:1817.0px;top:138.5px;width:10.0px;height:1.4px;background:#c03030;opacity:0.75;"></div>
<div class="a" style="left:1827.0px;top:138.5px;width:2.0px;height:1.4px;background:#222;opacity:0.75;"></div>
<div class="a" style="left:1798.0px;top:140.5px;width:2.0px;height:1.4px;background:#222;opacity:0.75;"></div>
<div class="a" style="left:1794.0px;top:142.5px;width:2.0px;height:1.4px;background:#222;opacity:0.75;"></div>
<div class="a" style="left:1906px;top:116px;width:14px;height:863px;background:#fafafa;"></div>
<div class="a" style="left:1906px;top:116px;width:1px;height:863px;background:#e4e4e4;"></div>
<div class="a" style="left:1907px;top:116px;width:13px;height:659px;background:#c1c1c1;"></div>
<svg style="left:441px;top:986px;" width="15" height="15" viewBox="0 0 15 15"><circle cx="7.5" cy="7.5" r="6.6" fill="none" stroke="#d23c3c" stroke-width="1.3"/><path d="M4.8 4.8l5.4 5.4M10.2 4.8l-5.4 5.4" stroke="#d23c3c" stroke-width="1.3"/></svg>
<div class="t" style="left:460.00px;top:987.00px;font:normal 13px/13px 'Liberation Sans',sans-serif;color:#cfcfcf;transform:scaleX(0.9682);transform-origin:0 0;">0</div>
<svg style="left:471px;top:985px;" width="16" height="15" viewBox="0 0 16 15"><path d="M8 1.2L15 13.8H1Z" fill="none" stroke="#e6ad5c" stroke-width="1.3" stroke-linejoin="round"/><path d="M8 5.5v4.3" stroke="#e6ad5c" stroke-width="1.6"/><rect x="7.2" y="10.8" width="1.6" height="1.5" fill="#e6ad5c"/></svg>
<div class="t" style="left:490.50px;top:987.00px;font:normal 13px/13px 'Liberation Sans',sans-serif;color:#cfcfcf;transform:scaleX(0.9682);transform-origin:0 0;">0</div>
<div class="t" style="left:1707.00px;top:987.00px;font:normal 13px/13px 'Liberation Sans',sans-serif;color:#cfcfcf;transform:scaleX(0.9167);transform-origin:0 0;">Spaces: 2</div>
<div class="t" style="left:1791.00px;top:987.00px;font:normal 13px/13px 'Liberation Sans',sans-serif;color:#cfcfcf;transform:scaleX(0.9228);transform-origin:0 0;">LF</div>
<div class="t" style="left:1836.00px;top:987.00px;font:normal 13px/13px 'Liberation Sans',sans-serif;color:#cfcfcf;transform:scaleX(0.9392);transform-origin:0 0;">JavaScript</div>
<div class="a" style="left:61px;top:1006px;width:1859px;height:1px;background:#3a3a3a;"></div>
<div class="a" style="left:61px;top:1039px;width:1859px;height:1px;background:#1a1a1a;"></div>
<div class="t" style="left:69.00px;top:1017.00px;font:normal 13px/13px 'Liberation Sans',sans-serif;color:#9a9a9a;transform:scaleX(1.0324);transform-origin:0 0;">Project:</div>
<div class="t" style="left:121.00px;top:1017.00px;font:normal 13px/13px 'Liberation Sans',sans-serif;color:#dcdcdc;transform:scaleX(0.9813);transform-origin:0 0;">terresdelumieres</div>
<svg style="left:220px;top:1021px;" width="9" height="6" viewBox="0 0 9 6"><path d="M0 0H8.5L4.25 5Z" fill="#cfcfcf"/></svg>
<div class="a" style="left:240px;top:1006px;width:1px;height:33px;background:#262626;"></div>
<svg style="left:253px;top:1014px;" width="18" height="18" viewBox="0 0 18 18"><g fill="none" stroke="#cfcfcf" stroke-width="1.3"><circle cx="9" cy="9" r="3"/><path d="M7.6 1.2h2.8l.5 2.2 1.5.8 2.1-.9 2 2-.9 2.1.8 1.5 2.2.5v2.8l-2.2.5-.8 1.5.9 2.1-2 2-2.1-.9-1.5.8-.5 2.2H7.6l-.5-2.2-1.5-.8-2.1.9-2-2 .9-2.1-.8-1.5L-.6 10.4V7.6l2.2-.5.8-1.5-.9-2.1 2-2 2.1.9 1.5-.8z" transform="translate(9 9) scale(0.92) translate(-9 -9)"/></g></svg>
<div class="a" style="left:285px;top:1006px;width:1px;height:33px;background:#262626;"></div>
<div class="t" style="left:298.00px;top:1017.00px;font:normal 13px/13px 'Liberation Sans',sans-serif;color:#9a9a9a;transform:scaleX(1.0191);transform-origin:0 0;">Target:</div>
<div class="t" style="left:345.00px;top:1017.00px;font:normal 13px/13px 'Liberation Sans',sans-serif;color:#dcdcdc;transform:scaleX(0.9527);transform-origin:0 0;">Terres de Lumieres</div>
<svg style="left:455px;top:1021px;" width="9" height="6" viewBox="0 0 9 6"><path d="M0 0H8.5L4.25 5Z" fill="#9a9a9a"/></svg>
<div class="a" style="left:475px;top:1006px;width:1px;height:33px;background:#262626;"></div>
<div class="a" style="left:486px;top:1006px;width:1px;height:33px;background:#262626;"></div>
<svg style="left:498px;top:1017px;" width="17" height="12" viewBox="0 0 17 12"><path d="M1 6.5L5.8 11L16 1" fill="none" stroke="#cfcfcf" stroke-width="1.4"/></svg>
<div class="t" style="left:522.00px;top:1017.00px;font:normal 13px/13px 'Liberation Sans',sans-serif;color:#d6d6d6;transform:scaleX(0.9227);transform-origin:0 0;">Check</div>
<div class="a" style="left:569px;top:1006px;width:1px;height:33px;background:#262626;"></div>
<svg style="left:582px;top:1014px;" width="16" height="18" viewBox="0 0 16 18"><path d="M8 1v13M2.5 8.5L8 14l5.5-5.5M1 17h14" fill="none" stroke="#cfcfcf" stroke-width="1.4"/></svg>
<div class="t" style="left:604.00px;top:1017.00px;font:normal 13px/13px 'Liberation Sans',sans-serif;color:#d6d6d6;transform:scaleX(0.9545);transform-origin:0 0;">Get</div>
<svg style="left:640px;top:1014px;" width="16" height="18" viewBox="0 0 16 18"><path d="M8 15V2M2.5 7.5L8 2l5.5 5.5M1 17h14" fill="none" stroke="#cfcfcf" stroke-width="1.4"/></svg>
<div class="t" style="left:662.50px;top:1017.00px;font:normal 13px/13px 'Liberation Sans',sans-serif;color:#d6d6d6;transform:scaleX(0.9616);transform-origin:0 0;">Publish</div>
<svg style="left:721px;top:1017px;" width="12" height="12" viewBox="0 0 12 12"><path d="M0.8 0.8l10.4 10.4M11.2 0.8L0.8 11.2" stroke="#cfcfcf" stroke-width="1.4"/></svg>
<div class="t" style="left:742.00px;top:1017.00px;font:normal 13px/13px 'Liberation Sans',sans-serif;color:#d6d6d6;transform:scaleX(1.0299);transform-origin:0 0;">Abort</div>
<div class="a" style="left:786px;top:1006px;width:1px;height:33px;background:#262626;"></div>
<svg style="left:1477px;top:1016px;" width="16" height="14" viewBox="0 0 16 14"><path d="M0 1h16M0 6.75h16M0 12.5h16" stroke="#3d8fe6" stroke-width="1.5"/></svg>
<div class="t" style="left:1499.00px;top:1017.00px;font:normal 13px/13px 'Liberation Sans',sans-serif;color:#3d8fe6;transform:scaleX(1.0506);transform-origin:0 0;">Output</div>
<svg style="left:1555px;top:1014px;" width="23" height="17" viewBox="0 0 23 17"><path d="M1 1.5L7 8L1 14.5M9 16h13" fill="none" stroke="#cfcfcf" stroke-width="1.4"/></svg>
<div class="t" style="left:1583.00px;top:1017.00px;font:normal 13px/13px 'Liberation Sans',sans-serif;color:#d6d6d6;transform:scaleX(0.9669);transform-origin:0 0;">Terminal</div>
<svg style="left:1649px;top:1022px;" width="8" height="6" viewBox="0 0 8 6"><path d="M0 0H7.5L3.75 5Z" fill="#9a9a9a"/></svg>
<div class="a" style="left:1670px;top:1006px;width:1px;height:33px;background:#262626;"></div>
<svg style="left:1683px;top:1017px;" width="16" height="12" viewBox="0 0 16 12"><path d="M1 6.5L5.5 11L15.5 1" fill="none" stroke="#cfcfcf" stroke-width="1.4"/></svg>
<div class="t" style="left:1705.00px;top:1017.00px;font:normal 13px/13px 'Liberation Sans',sans-serif;color:#d6d6d6;transform:scaleX(0.9427);transform-origin:0 0;">System Check</div>
<div class="a" style="left:1797px;top:1006px;width:1px;height:33px;background:#262626;"></div>
<svg style="left:1808px;top:1015px;" width="20" height="17" viewBox="0 0 20 17"><path d="M9.75 15.4L1 10L11.1 0.6L18.6 7.3Z M6.4 4.8L13.6 12.4 M9.75 15.4H19.2" fill="none" stroke="#cfcfcf" stroke-width="1.3" stroke-linejoin="round"/></svg>
<svg style="left:1843px;top:1013px;" width="20" height="19" viewBox="0 0 20 19"><path d="M7 6.5V5a3 3 0 0 1 6 0v1.5 M4.8 7.5Q4.8 6.5 6 6.5H14Q15.2 6.5 15.2 7.5V12.5a5.2 5.2 0 0 1-10.4 0Z M10 8.5v8.5 M1 10.5h3.8 M15.2 10.5H19 M2 4.5l2.8 2.5 M18 4.5l-2.8 2.5 M2 17.5l3.2-2.5 M18 17.5l-3.2-2.5" fill="none" stroke="#cfcfcf" stroke-width="1.3"/></svg>
<div class="a" style="left:1877px;top:1006px;width:1px;height:33px;background:#262626;"></div>
<svg style="left:1890px;top:1018px;" width="16" height="9" viewBox="0 0 16 9"><path d="M0.8 8.2L8 1L15.2 8.2" fill="none" stroke="#cfcfcf" stroke-width="1.4"/></svg>
<svg style="left:16px;top:1052px;" width="17" height="17" viewBox="0 0 17 17"><path d="M0 2.3L7.2 1.3V8H0Z M8.2 1.2L17 0V8H8.2Z M0 9H7.2V15.7L0 14.7Z M8.2 9H17V17L8.2 15.8Z" fill="#fff"/></svg>
<div class="a" style="left:48px;top:1040px;width:344px;height:40px;background:#f0f0f0;"></div>
<svg style="left:60px;top:1052px;" width="17" height="17" viewBox="0 0 17 17"><circle cx="10.5" cy="6.5" r="5.5" fill="none" stroke="#222" stroke-width="1.3"/><path d="M6.5 10.5L1 16" stroke="#222" stroke-width="1.5"/></svg>
<div class="t" style="left:88.00px;top:1053.30px;font:normal 15px/15px 'Liberation Sans',sans-serif;color:#3a3a3a;transform:scaleX(0.9825);transform-origin:0 0;">Taper ici pour rechercher</div>
<svg style="left:406px;top:1051px;" width="20" height="19" viewBox="0 0 20 19"><path d="M1 3.5h12v12H1z" fill="none" stroke="#fff" stroke-width="1.3"/><path d="M1 0.7h12 M1 18.3h12" stroke="#fff" stroke-width="1.3"/><path d="M16.5 1v2.5 M16.5 6.5v6 M16.5 15.5v2.5" stroke="#fff" stroke-width="1.6"/></svg>
<svg style="left:453px;top:1048px;" width="24" height="24" viewBox="0 0 24 24"><defs><linearGradient id="np" x1="0" y1="0" x2="0" y2="1"><stop offset="0" stop-color="#f4f4f4"/><stop offset="0.45" stop-color="#d8ecc0"/><stop offset="1" stop-color="#3fb83a"/></linearGradient></defs><path d="M2.5 0.5H14L18 4.5V23.5H2.5Z" fill="url(#np)" stroke="#bbb" stroke-width="0.8"/><path d="M6 7v8M8 9h2M11 9h2" stroke="#333" stroke-width="1.3"/><path d="M21 1.5L12 17" stroke="#e0a020" stroke-width="2.4"/><path d="M12 17l-0.8 2.5 2-1.6z" fill="#333"/></svg>
<div class="a" style="left:495px;top:1078px;width:40px;height:2px;background:#76b9ed;"></div>
<svg style="left:503px;top:1048px;" width="24" height="24" viewBox="0 0 24 24"><circle cx="12" cy="12" r="11" fill="#f6a21b"/><path d="M12 1A11 11 0 0 1 23 12H12Z" fill="#e53935"/><path d="M1 12A11 11 0 0 1 12 1V12Z" fill="#2196f3"/><circle cx="12" cy="12" r="6" fill="#fff"/><rect x="9.5" y="11" width="5" height="4.5" fill="#3b6fd8"/><path d="M10.5 11V9.5a1.5 1.5 0 0 1 3 0V11" fill="none" stroke="#3b6fd8" stroke-width="1.1"/></svg>
<svg style="left:553px;top:1048px;" width="24" height="24" viewBox="0 0 24 24"><circle cx="12" cy="12" r="11" fill="#db4437"/><path d="M12 12L22.5 8.5A11 11 0 0 1 8 22.5Z" fill="#f4b400"/><path d="M12 12L8 22.5A11 11 0 0 1 1.5 8.5Z" fill="#0f9d58"/><path d="M12 12L1.5 8.5A11 11 0 0 1 5 3.5Z" fill="#0f9d58"/><circle cx="12" cy="12" r="5.5" fill="#fff"/><circle cx="12" cy="12" r="4.2" fill="#4285f4"/></svg>
<svg style="left:602px;top:1048px;" width="24" height="24" viewBox="0 0 24 24"><rect x="1" y="2" width="22" height="21" fill="#1f0040" stroke="#9999ff" stroke-width="1.6"/><text x="12" y="16.5" text-anchor="middle" font-family="Liberation Sans" font-size="12" fill="#d8b0ff">Ae</text></svg>
<svg style="left:651px;top:1048px;" width="24" height="24" viewBox="0 0 24 24"><defs><linearGradient id="oo" x1="0" y1="0" x2="1" y2="0"><stop offset="0" stop-color="#3f6272"/><stop offset="0.5" stop-color="#8aa6b4"/><stop offset="1" stop-color="#6d8c9a"/></linearGradient></defs><path d="M1.5 1.5Q12 -0.5 22.5 1.5V23Q12 25 1.5 23Q4 12 1.5 1.5Z" fill="url(#oo)"/><path d="M2 7Q8 2 14 4Q10 3.5 5 7.5Z" fill="#e8eef2"/><path d="M9 12h10M9 15.5h10M9 19h10" stroke="#dfe8ec" stroke-width="1.6"/></svg>
<svg style="left:699px;top:1048px;" width="24" height="24" viewBox="0 0 24 24"><rect x="1" y="2" width="22" height="21" fill="#001e36" stroke="#31a8ff" stroke-width="1.6"/><text x="12" y="16.5" text-anchor="middle" font-family="Liberation Sans" font-size="12" fill="#31a8ff">Ps</text></svg>
<svg style="left:749px;top:1048px;" width="24" height="24" viewBox="0 0 24 24"><circle cx="12" cy="12" r="11" fill="#d0343a"/><text x="12" y="16.3" text-anchor="middle" font-family="Liberation Sans" font-weight="bold" font-size="11" fill="#fff">DX</text></svg>
<svg style="left:798px;top:1048px;" width="24" height="24" viewBox="0 0 24 24"><path d="M21.5 15.5C19 21 13.5 23 9 21.5C4 20 1.5 15 2.5 10C4 3.5 11 0.5 16.5 3C20.5 5 22 9 21.5 13H8C8 17 12 19.5 17 18C18.5 17.5 20 16.5 21.5 15.5Z M8.3 9.8H16C15.8 7 13.5 5.5 12 5.5C10.5 5.5 8.8 7 8.3 9.8Z" fill="#1e88e5" fill-rule="evenodd"/></svg>
<svg style="left:847px;top:1048px;" width="24" height="24" viewBox="0 0 24 24"><path d="M1 4h8l2 2h12v16H1Z" fill="#f0c040"/><path d="M1 9h22v13H1Z" fill="#ffd760"/><rect x="7" y="14" width="10" height="5" fill="#3d8be0"/></svg>
<div class="a" style="left:883px;top:1040px;width:48px;height:40px;background:#3a3a3a;"></div>
<div class="a" style="left:884px;top:1078px;width:48px;height:2px;background:#76b9ed;"></div>
<svg style="left:895px;top:1048px;" width="24" height="24" viewBox="0 0 24 24"><circle cx="12" cy="12" r="11" fill="#d8362a"/><path d="M5.5 8.5q2-3 4 0q-1.5 4 0 8l3-5.5l2 5.5q3-4 3-9.5" fill="none" stroke="#fff" stroke-width="1.8" stroke-linecap="round" stroke-linejoin="round"/></svg>
<div class="a" style="left:936px;top:1078px;width:40px;height:2px;background:#76b9ed;"></div>
<svg style="left:944px;top:1048px;" width="24" height="24" viewBox="0 0 24 24"><rect x="2" y="3" width="18" height="13" fill="#ddd" stroke="#999" stroke-width="1"/><rect x="4" y="5" width="14" height="9" fill="#e8f4ff"/><path d="M5 11l3-3 2 2 3-4 3 4" fill="none" stroke="#3080d0" stroke-width="1"/><path d="M7 18h10v3H7z" fill="#bbb"/></svg>
<div class="t" style="left:1470.00px;top:1053.00px;font:normal 13px/13px 'Liberation Sans',sans-serif;color:#d6d6d6;transform:scaleX(0.8597);transform-origin:0 0;">Adresse</div>
<div class="a" style="left:1517px;top:1051px;width:230px;height:20px;background:#fff;"></div>
<div class="a" style="left:1730px;top:1051px;width:1px;height:20px;background:#ddd;"></div>
<svg style="left:1716px;top:1058px;" width="11" height="7" viewBox="0 0 11 7"><path d="M1 1l4.5 4.5L10 1" fill="none" stroke="#444" stroke-width="1.3"/></svg>
<svg style="left:1734px;top:1052px;" width="12" height="16" viewBox="0 0 12 16"><path d="M9.8 6.5A4.5 4.5 0 1 1 6 3.5" fill="none" stroke="#999" stroke-width="1.4"/><path d="M5 1.5l2.5 2L5 5.5" fill="none" stroke="#999" stroke-width="1.3"/></svg>
<svg style="left:1754px;top:1055px;" width="14" height="9" viewBox="0 0 14 9"><path d="M1 7.5L7 1.5L13 7.5" fill="none" stroke="#fff" stroke-width="1.4"/></svg>
<svg style="left:1776px;top:1052px;" width="18" height="17" viewBox="0 0 18 17"><path d="M4.5 1l4.5 3-4.5 3L0 4Z M13.5 1l4.5 3-4.5 3L9 4Z M4.5 7l4.5 3-4.5 3L0 10Z M13.5 7l4.5 3-4.5 3L9 10Z M9 11l4 2.5-4 2.5-4-2.5Z" fill="#fff"/><rect x="0.5" y="7" width="9.5" height="9.5" fill="#d81c2a"/><text x="5.2" y="15" text-anchor="middle" font-family="Liberation Sans" font-weight="bold" font-size="8.5" fill="#fff">1</text></svg>
<div class="t" style="left:1819.00px;top:1044.84px;font:normal 12px/12px 'Liberation Sans',sans-serif;color:#fff;transform:scaleX(0.8658);transform-origin:0 0;">17:43</div>
<div class="t" style="left:1804.00px;top:1062.84px;font:normal 12px/12px 'Liberation Sans',sans-serif;color:#fff;transform:scaleX(0.9491);transform-origin:0 0;">13/07/2020</div>
<svg style="left:1878px;top:1051px;" width="18" height="18" viewBox="0 0 18 18"><path d="M0.5 0.5h16.5v13H11l-2.5 3.5L6 13.5H0.5Z" fill="#fff"/><path d="M3.5 4h10M3.5 6.8h10M3.5 9.6h7" stroke="#1f1f1f" stroke-width="1.1"/></svg>
<div class="a" style="left:1914px;top:1040px;width:1px;height:40px;background:#555;"></div>
<svg style="left:0px;top:20px;" width="61" height="50" viewBox="0 0 61 50"><path d="M30 17.5V26.5 M19 35.5Q20 26.5 30 26.5Q40 26.5 41 35.5" fill="none" stroke="#d83a2e" stroke-width="2.1"/><g fill="#333" stroke="#ededed" stroke-width="2.1"><circle cx="30" cy="14" r="3.6"/><circle cx="19" cy="35.6" r="3.6"/><circle cx="30" cy="35.6" r="3.6"/><circle cx="40.7" cy="35.6" r="3.6"/></g></svg>
<svg style="left:0px;top:70px;" width="61" height="40" viewBox="0 0 61 40"><path d="M23.1 16.5V19Q23.1 21 25.3 23.5L30 28.5L34.7 23.5Q36.9 21 36.9 19V16.5 M30 28.5V31" fill="none" stroke="#d83a2e" stroke-width="2.1"/><g fill="#333" stroke="#ededed" stroke-width="2.1"><circle cx="23.1" cy="12.8" r="3.6"/><circle cx="36.1" cy="12.8" r="3.6"/><circle cx="30" cy="34.7" r="3.6"/></g></svg>
<svg style="left:0px;top:120px;" width="61" height="40" viewBox="0 0 61 40"><path d="M36 11.6H46.3V22.7H36.5 M40.5 18.7L36.5 22.7L40.5 26.7 M24.5 22.7H14V34H24 M20 30L24 34L20 38" fill="none" stroke="#d83a2e" stroke-width="2.1"/><g fill="#333" stroke="#ededed" stroke-width="2.1"><circle cx="30" cy="11.6" r="3.6"/><circle cx="30" cy="22.7" r="3.6"/><circle cx="30" cy="34" r="3.6"/></g></svg>
<svg style="left:0px;top:170px;" width="6" height="45" viewBox="0 0 6 45"><path d="M0 0H1.5L4 4V40L1.5 44.5H0Z" fill="#3d9bf5"/></svg>
<svg style="left:0px;top:170px;" width="61" height="45" viewBox="0 0 61 45"><g fill="none" stroke="#ededed" stroke-width="2.1"><ellipse cx="29.4" cy="12" rx="13.7" ry="5.5"/><path d="M15.7 12V31.5Q16 37.5 32.5 37.5 M43.1 12V21.5 M15.7 22Q16.5 26.5 30.5 27"/></g><circle cx="40" cy="30.8" r="7.3" fill="none" stroke="#d83a2e" stroke-width="2.1"/></svg>
<svg style="left:0px;top:220px;" width="61" height="40" viewBox="0 0 61 40"><circle cx="20.8" cy="21" r="6.2" fill="none" stroke="#d83a2e" stroke-width="2.1"/><g fill="#333" stroke="#ededed" stroke-width="2.1"><circle cx="41.7" cy="8.9" r="3.5"/><circle cx="41.7" cy="21" r="3.5"/><circle cx="41.7" cy="32.5" r="3.5"/><path d="M26.3 18L38.5 10.8 M27 21H38.2 M26.3 24L38.5 30.6"/></g></svg>
<svg style="left:8px;top:270px;" width="45" height="45" viewBox="0 0 45 45"><path d="M19.2 17.5L26.25 10.4L32.9 16.9L18.5 31.3 M25 25H35.5Q36.7 25 36.7 26.2V33.8Q36.7 35 35.5 35H15.8" fill="none" stroke="#ededed" stroke-width="2.1" stroke-linejoin="round"/><path d="M13.1 34.6Q8.3 34.6 8.3 29.8V7.5Q8.3 6.25 9.5 6.25H16.7Q17.9 6.25 17.9 7.5V29.8Q17.9 34.6 13.1 34.6Z M8.3 13.3H17.9 M8.3 21.25H17.9" fill="none" stroke="#d83a2e" stroke-width="2.1"/><rect x="12.3" y="29.2" width="1.7" height="1.7" fill="#d83a2e"/></svg>
<svg style="left:0px;top:315px;" width="61" height="45" viewBox="0 0 61 45"><circle cx="25.7" cy="19.7" r="9.6" fill="none" stroke="#d83a2e" stroke-width="2.1"/><path d="M32.6 26.7L45.1 38.6" stroke="#ededed" stroke-width="2.1"/></svg>
<svg style="left:8px;top:838px;" width="45" height="45" viewBox="0 0 45 45"><path d="M18.75 10H13.25Q11.25 10 11.25 12V25.4 M15.8 25.4H9Q7.5 25.4 7.5 27V32.7Q7.5 36.7 11.5 36.7H32.7Q36.7 36.7 36.7 32.7V27Q36.7 25.4 35 25.4H28.5Q27.5 25.4 27.3 26.5L27 27.7H17Q16.2 27.7 16 26.5Z" fill="none" stroke="#ededed" stroke-width="2.1" stroke-linejoin="round"/><path d="M18.75 27V9.5Q18.75 7.5 20.75 7.5H30.9Q32.9 7.5 32.9 9.5V25" fill="none" stroke="#d83a2e" stroke-width="2.1"/></svg>
<svg style="left:8px;top:885px;" width="45" height="45" viewBox="0 0 45 45"><path d="M7.1 22.7V13Q7.1 9 11.1 9H21.7Q22.7 9 22.7 10.8A3.4 3.4 0 0 1 22.7 17.5V22.7H28.3A3.15 3.15 0 0 1 34.6 22.7H35.5Q36.9 22.7 36.9 24V34.75Q36.9 38.75 32.9 38.75H22.7" fill="none" stroke="#ededed" stroke-width="2.1"/><path d="M7.1 22.7V34.75Q7.1 38.75 11.1 38.75H22.7V34.6A3.95 3.95 0 0 1 22.7 26.7V22.7H18A3 3 0 0 0 12 22.7H7.1Z" fill="none" stroke="#d83a2e" stroke-width="2.1"/></svg>
<svg style="left:8px;top:935px;" width="45" height="45" viewBox="0 0 45 45"><path d="M34.60 22.90 L34.60 23.23 L34.58 23.56 L34.56 23.90 L34.53 24.23 L34.75 24.59 L35.26 25.02 L35.80 25.48 L36.34 25.97 L36.84 26.49 L37.29 27.02 L37.43 27.50 L37.31 27.91 L37.17 28.31 L37.02 28.71 L36.87 29.10 L36.70 29.49 L36.52 29.87 L36.33 30.25 L36.14 30.63 L35.70 30.87 L35.00 30.93 L34.28 30.94 L33.55 30.91 L32.85 30.85 L32.18 30.79 L31.77 30.89 L31.56 31.15 L31.34 31.40 L31.11 31.64 L30.88 31.88 L30.64 32.11 L30.40 32.34 L30.15 32.56 L29.89 32.77 L29.79 33.18 L29.85 33.85 L29.91 34.55 L29.94 35.28 L29.93 36.00 L29.87 36.70 L29.63 37.14 L29.25 37.33 L28.87 37.52 L28.49 37.70 L28.10 37.87 L27.71 38.02 L27.31 38.17 L26.91 38.31 L26.50 38.43 L26.02 38.29 L25.49 37.84 L24.97 37.34 L24.48 36.80 L24.02 36.26 L23.59 35.75 L23.23 35.53 L22.90 35.56 L22.56 35.58 L22.23 35.60 L21.90 35.60 L21.57 35.60 L21.24 35.58 L20.90 35.56 L20.57 35.53 L20.21 35.75 L19.78 36.26 L19.32 36.80 L18.83 37.34 L18.31 37.84 L17.78 38.29 L17.30 38.43 L16.89 38.31 L16.49 38.17 L16.09 38.02 L15.70 37.87 L15.31 37.70 L14.93 37.52 L14.55 37.33 L14.17 37.14 L13.93 36.70 L13.87 36.00 L13.86 35.28 L13.89 34.55 L13.95 33.85 L14.01 33.18 L13.91 32.77 L13.65 32.56 L13.40 32.34 L13.16 32.11 L12.92 31.88 L12.69 31.64 L12.46 31.40 L12.24 31.15 L12.03 30.89 L11.62 30.79 L10.95 30.85 L10.25 30.91 L9.52 30.94 L8.80 30.93 L8.10 30.87 L7.66 30.63 L7.47 30.25 L7.28 29.87 L7.10 29.49 L6.93 29.10 L6.78 28.71 L6.63 28.31 L6.49 27.91 L6.37 27.50 L6.51 27.02 L6.96 26.49 L7.46 25.97 L8.00 25.48 L8.54 25.02 L9.05 24.59 L9.27 24.23 L9.24 23.90 L9.22 23.56 L9.20 23.23 L9.20 22.90 L9.20 22.57 L9.22 22.24 L9.24 21.90 L9.27 21.57 L9.05 21.21 L8.54 20.78 L8.00 20.32 L7.46 19.83 L6.96 19.31 L6.51 18.78 L6.37 18.30 L6.49 17.89 L6.63 17.49 L6.78 17.09 L6.93 16.70 L7.10 16.31 L7.28 15.93 L7.47 15.55 L7.66 15.17 L8.10 14.93 L8.80 14.87 L9.52 14.86 L10.25 14.89 L10.95 14.95 L11.62 15.01 L12.03 14.91 L12.24 14.65 L12.46 14.40 L12.69 14.16 L12.92 13.92 L13.16 13.69 L13.40 13.46 L13.65 13.24 L13.91 13.03 L14.01 12.62 L13.95 11.95 L13.89 11.25 L13.86 10.52 L13.87 9.80 L13.93 9.10 L14.17 8.66 L14.55 8.47 L14.93 8.28 L15.31 8.10 L15.70 7.93 L16.09 7.78 L16.49 7.63 L16.89 7.49 L17.30 7.37 L17.78 7.51 L18.31 7.96 L18.83 8.46 L19.32 9.00 L19.78 9.54 L20.21 10.05 L20.57 10.27 L20.90 10.24 L21.24 10.22 L21.57 10.20 L21.90 10.20 L22.23 10.20 L22.56 10.22 L22.90 10.24 L23.23 10.27 L23.59 10.05 L24.02 9.54 L24.48 9.00 L24.97 8.46 L25.49 7.96 L26.02 7.51 L26.50 7.37 L26.91 7.49 L27.31 7.63 L27.71 7.78 L28.10 7.93 L28.49 8.10 L28.87 8.28 L29.25 8.47 L29.63 8.66 L29.87 9.10 L29.93 9.80 L29.94 10.52 L29.91 11.25 L29.85 11.95 L29.79 12.62 L29.89 13.03 L30.15 13.24 L30.40 13.46 L30.64 13.69 L30.88 13.92 L31.11 14.16 L31.34 14.40 L31.56 14.65 L31.77 14.91 L32.18 15.01 L32.85 14.95 L33.55 14.89 L34.28 14.86 L35.00 14.87 L35.70 14.93 L36.14 15.17 L36.33 15.55 L36.52 15.93 L36.70 16.31 L36.87 16.70 L37.02 17.09 L37.17 17.49 L37.31 17.89 L37.43 18.30 L37.29 18.78 L36.84 19.31 L36.34 19.83 L35.80 20.32 L35.26 20.78 L34.75 21.21 L34.53 21.57 L34.56 21.90 L34.58 22.24 L34.60 22.57Z" fill="none" stroke="#ededed" stroke-width="2.1" stroke-linejoin="round"/><circle cx="21.9" cy="22.9" r="6.6" fill="none" stroke="#d83a2e" stroke-width="2.1"/></svg>
<svg style="left:0px;top:985px;" width="61" height="50" viewBox="0 0 61 50"><defs><clipPath id="av"><circle cx="30.2" cy="26.9" r="18"/></clipPath></defs><g clip-path="url(#av)"><rect x="10" y="8" width="42" height="40" fill="#6a86d8"/><path d="M10 8H50V16Q40 20 30 20Q20 19 10 16Z" fill="#58d6d6"/><path d="M10 20Q20 17 28 22L26 30L12 36H10Z" fill="#9a8ea8"/><path d="M10 30L24 34L26 48H10Z" fill="#2a3570"/><path d="M30 20Q38 18 42 24Q44 34 38 40Q32 42 30 36Z" fill="#8a7a9a"/><path d="M34 40L50 34V48H32Z" fill="#2a2f66"/><path d="M25 38L33 36L37 48H28Z" fill="#c0a070"/><circle cx="28.8" cy="25.5" r="4.8" fill="#1a1d3a"/><path d="M14 34h10M13 37h9M15 40h9" stroke="#d88888" stroke-width="1.1"/><path d="M14 35.5h9M15 38.5h8" stroke="#50c0c0" stroke-width="1"/></g><ellipse cx="45" cy="11.3" rx="9.8" ry="7.6" fill="#d8362a"/><text x="45" y="15" text-anchor="middle" font-family="Liberation Sans" font-weight="bold" font-size="10.5" fill="#fff">Pro</text></svg>
</body></html>
